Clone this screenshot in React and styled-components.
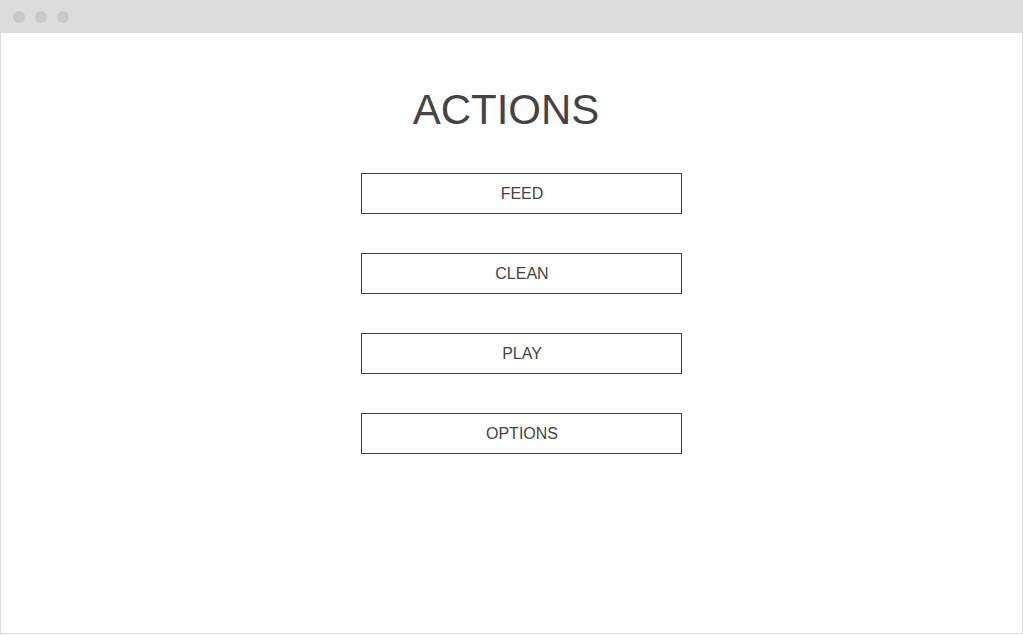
import React from "react";
import styled, { createGlobalStyle } from "styled-components";

const GlobalStyles = createGlobalStyle`
  * {
    box-sizing: border-box;
  }
  body {
    margin: 0;
    background: #ffffff;
    font-family: "Liberation Sans", Arial, sans-serif;
    color: #444444;
  }
`;

const Window = styled.div`
  width: 1023px;
  height: 634px;
  border: 1px solid #dcdcdc;
  border-top: none;
  display: flex;
  flex-direction: column;
`;

const TitleBar = styled.div`
  height: 33px;
  margin: 0 -1px;
  background: #dcdcdc;
  display: flex;
  align-items: center;
  gap: 10px;
  padding-left: 13px;
`;

const Dot = styled.span`
  width: 12px;
  height: 12px;
  border-radius: 50%;
  background: #c8c8c8;
`;

const Content = styled.div`
  flex: 1;
  display: flex;
  flex-direction: column;
  align-items: center;
  padding: 53px 0 0 19px;
`;

const Title = styled.h1`
  margin: 0 30px 39px 0;
  font-size: 42px;
  line-height: 48px;
  font-weight: normal;
  color: #444444;
`;

const ActionList = styled.div`
  display: flex;
  flex-direction: column;
  gap: 39px;
`;

const ActionButton = styled.button`
  width: 321px;
  height: 41px;
  border: 1px solid #444444;
  background: #ffffff;
  font-family: "Liberation Sans", Arial, sans-serif;
  font-size: 16px;
  color: #444444;
  cursor: pointer;
  padding: 0 0 0 2px;
`;

const actions = ["FEED", "CLEAN", "PLAY", "OPTIONS"];

function App() {
  return (
    <>
      <GlobalStyles />
      <Window>
        <TitleBar>
          <Dot />
          <Dot />
          <Dot />
        </TitleBar>
        <Content>
          <Title>ACTIONS</Title>
          <ActionList>
            {actions.map((a) => (
              <ActionButton key={a}>{a}</ActionButton>
            ))}
          </ActionList>
        </Content>
      </Window>
    </>
  );
}

export default App;
